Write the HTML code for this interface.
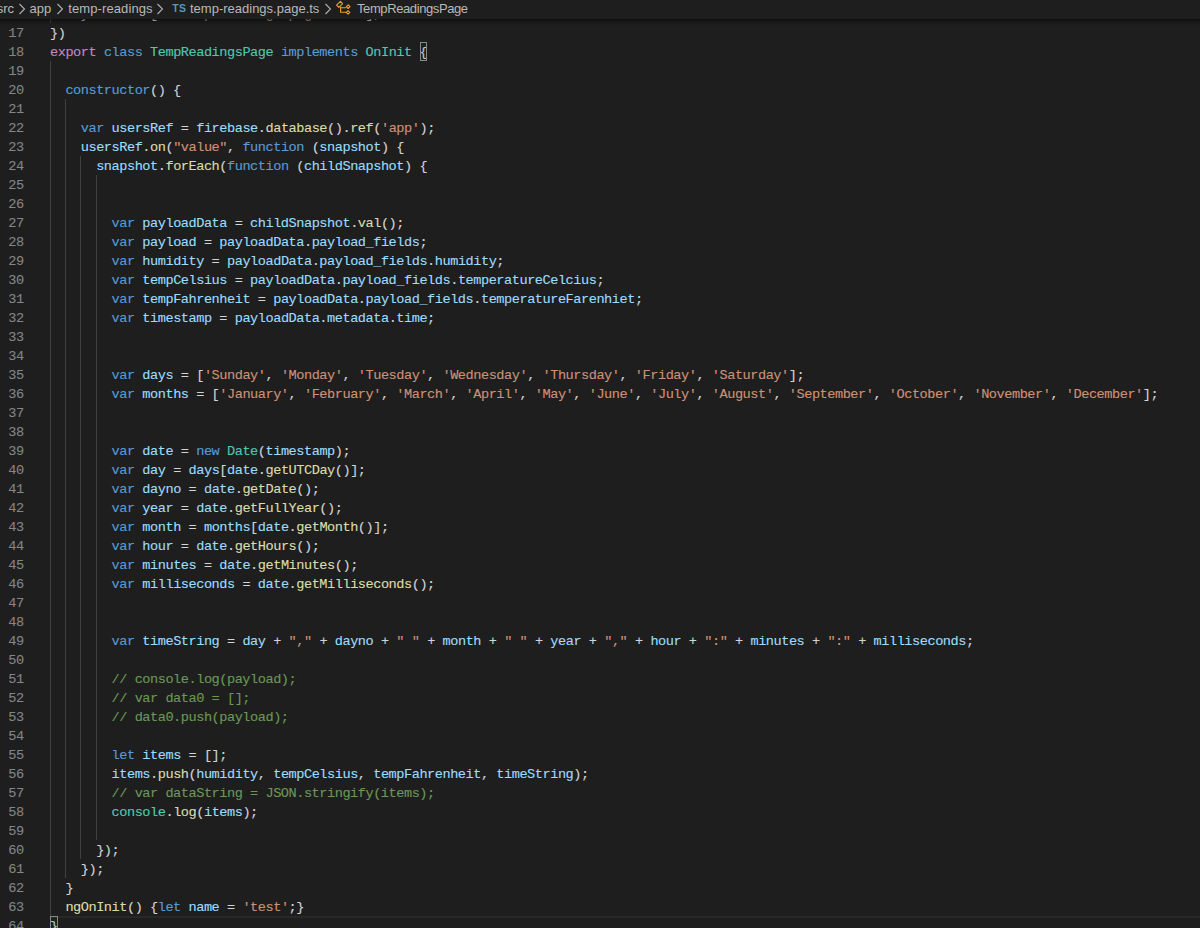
<!DOCTYPE html>
<html><head><meta charset="utf-8"><style>
html,body{margin:0;padding:0;}
body{width:1200px;height:928px;overflow:hidden;background:#1e1e1e;position:relative;}
.ed{position:absolute;left:0;top:0;width:1200px;height:928px;overflow:hidden;}
.ln{position:absolute;left:0;width:23.7px;margin-top:1px;letter-spacing:-0.4630px;-webkit-text-stroke:0.1px currentColor;height:19px;line-height:19px;text-align:right;color:#858585;font-family:"Liberation Mono",monospace;font-size:13.600px;white-space:pre;}
.cl{position:absolute;left:50px;margin-top:0.5px;height:19px;line-height:19px;color:#d4d4d4;font-family:"Liberation Mono",monospace;font-size:13.600px;letter-spacing:-0.4630px;white-space:pre;-webkit-text-stroke:0.12px currentColor;}
.ig{position:absolute;width:1px;height:19px;background:#404040;}
.kw{color:#569cd6}.ctl{color:#c586c0}.ty{color:#4ec9b0}.var{color:#9cdcfe}.fn{color:#dcdcaa}.str{color:#ce9178}.com{color:#6a9955}.pun{color:#d4d4d4}
.bc{position:absolute;left:0;top:0;width:1200px;height:19px;background:#1e1e1e;font-family:"Liberation Sans",sans-serif;font-size:13px;color:#b9b9b9;white-space:pre;}
.bc span{position:absolute;top:0;line-height:19px;}
.shadow{position:absolute;left:0;top:19px;width:1200px;height:6px;box-shadow:#000 0 6px 6px -6px inset;}
.curline{position:absolute;left:50px;top:916px;width:1150px;height:17px;border-top:2px solid #282828;}
.bm{position:absolute;box-sizing:border-box;border:1px solid #888;background:rgba(0,100,0,0.1);}
</style></head><body>
<div class="ed">
<div class="curline"></div>
<div class="ln" style="top:4px">16</div>
<div class="cl" style="top:4px">  <span class="var">styleUrls</span><span class="pun">: [</span><span class="str">'./temp-readings.page.scss'</span><span class="pun">],</span></div>
<div class="ig" style="top:4px;left:50px"></div>
<div class="ln" style="top:23px">17</div>
<div class="cl" style="top:23px"><span class="pun">})</span></div>
<div class="ln" style="top:42px">18</div>
<div class="cl" style="top:42px"><span class="ctl">export</span><span class="pun"> </span><span class="kw">class</span><span class="pun"> </span><span class="ty">TempReadingsPage</span><span class="pun"> </span><span class="kw">implements</span><span class="pun"> </span><span class="ty">OnInit</span><span class="pun"> {</span></div>
<div class="ln" style="top:61px">19</div>
<div class="cl" style="top:61px"></div>
<div class="ig" style="top:61px;left:50px"></div>
<div class="ln" style="top:80px">20</div>
<div class="cl" style="top:80px">  <span class="kw">constructor</span><span class="pun">() {</span></div>
<div class="ig" style="top:80px;left:50px"></div>
<div class="ln" style="top:99px">21</div>
<div class="cl" style="top:99px"></div>
<div class="ig" style="top:99px;left:50px"></div>
<div class="ig" style="top:99px;left:65px"></div>
<div class="ln" style="top:118px">22</div>
<div class="cl" style="top:118px">    <span class="kw">var</span><span class="pun"> </span><span class="var">usersRef</span><span class="pun"> = </span><span class="var">firebase</span><span class="pun">.</span><span class="fn">database</span><span class="pun">().</span><span class="fn">ref</span><span class="pun">(</span><span class="str">'app'</span><span class="pun">);</span></div>
<div class="ig" style="top:118px;left:50px"></div>
<div class="ig" style="top:118px;left:65px"></div>
<div class="ln" style="top:137px">23</div>
<div class="cl" style="top:137px">    <span class="var">usersRef</span><span class="pun">.</span><span class="fn">on</span><span class="pun">(</span><span class="str">"value"</span><span class="pun">, </span><span class="kw">function</span><span class="pun"> (</span><span class="var">snapshot</span><span class="pun">) {</span></div>
<div class="ig" style="top:137px;left:50px"></div>
<div class="ig" style="top:137px;left:65px"></div>
<div class="ln" style="top:156px">24</div>
<div class="cl" style="top:156px">      <span class="var">snapshot</span><span class="pun">.</span><span class="fn">forEach</span><span class="pun">(</span><span class="kw">function</span><span class="pun"> (</span><span class="var">childSnapshot</span><span class="pun">) {</span></div>
<div class="ig" style="top:156px;left:50px"></div>
<div class="ig" style="top:156px;left:65px"></div>
<div class="ig" style="top:156px;left:80px"></div>
<div class="ln" style="top:175px">25</div>
<div class="cl" style="top:175px"></div>
<div class="ig" style="top:175px;left:50px"></div>
<div class="ig" style="top:175px;left:65px"></div>
<div class="ig" style="top:175px;left:80px"></div>
<div class="ig" style="top:175px;left:96px"></div>
<div class="ln" style="top:194px">26</div>
<div class="cl" style="top:194px"></div>
<div class="ig" style="top:194px;left:50px"></div>
<div class="ig" style="top:194px;left:65px"></div>
<div class="ig" style="top:194px;left:80px"></div>
<div class="ig" style="top:194px;left:96px"></div>
<div class="ln" style="top:213px">27</div>
<div class="cl" style="top:213px">        <span class="kw">var</span><span class="pun"> </span><span class="var">payloadData</span><span class="pun"> = </span><span class="var">childSnapshot</span><span class="pun">.</span><span class="fn">val</span><span class="pun">();</span></div>
<div class="ig" style="top:213px;left:50px"></div>
<div class="ig" style="top:213px;left:65px"></div>
<div class="ig" style="top:213px;left:80px"></div>
<div class="ig" style="top:213px;left:96px"></div>
<div class="ln" style="top:232px">28</div>
<div class="cl" style="top:232px">        <span class="kw">var</span><span class="pun"> </span><span class="var">payload</span><span class="pun"> = </span><span class="var">payloadData</span><span class="pun">.</span><span class="var">payload_fields</span><span class="pun">;</span></div>
<div class="ig" style="top:232px;left:50px"></div>
<div class="ig" style="top:232px;left:65px"></div>
<div class="ig" style="top:232px;left:80px"></div>
<div class="ig" style="top:232px;left:96px"></div>
<div class="ln" style="top:251px">29</div>
<div class="cl" style="top:251px">        <span class="kw">var</span><span class="pun"> </span><span class="var">humidity</span><span class="pun"> = </span><span class="var">payloadData</span><span class="pun">.</span><span class="var">payload_fields</span><span class="pun">.</span><span class="var">humidity</span><span class="pun">;</span></div>
<div class="ig" style="top:251px;left:50px"></div>
<div class="ig" style="top:251px;left:65px"></div>
<div class="ig" style="top:251px;left:80px"></div>
<div class="ig" style="top:251px;left:96px"></div>
<div class="ln" style="top:270px">30</div>
<div class="cl" style="top:270px">        <span class="kw">var</span><span class="pun"> </span><span class="var">tempCelsius</span><span class="pun"> = </span><span class="var">payloadData</span><span class="pun">.</span><span class="var">payload_fields</span><span class="pun">.</span><span class="var">temperatureCelcius</span><span class="pun">;</span></div>
<div class="ig" style="top:270px;left:50px"></div>
<div class="ig" style="top:270px;left:65px"></div>
<div class="ig" style="top:270px;left:80px"></div>
<div class="ig" style="top:270px;left:96px"></div>
<div class="ln" style="top:289px">31</div>
<div class="cl" style="top:289px">        <span class="kw">var</span><span class="pun"> </span><span class="var">tempFahrenheit</span><span class="pun"> = </span><span class="var">payloadData</span><span class="pun">.</span><span class="var">payload_fields</span><span class="pun">.</span><span class="var">temperatureFarenhiet</span><span class="pun">;</span></div>
<div class="ig" style="top:289px;left:50px"></div>
<div class="ig" style="top:289px;left:65px"></div>
<div class="ig" style="top:289px;left:80px"></div>
<div class="ig" style="top:289px;left:96px"></div>
<div class="ln" style="top:308px">32</div>
<div class="cl" style="top:308px">        <span class="kw">var</span><span class="pun"> </span><span class="var">timestamp</span><span class="pun"> = </span><span class="var">payloadData</span><span class="pun">.</span><span class="var">metadata</span><span class="pun">.</span><span class="var">time</span><span class="pun">;</span></div>
<div class="ig" style="top:308px;left:50px"></div>
<div class="ig" style="top:308px;left:65px"></div>
<div class="ig" style="top:308px;left:80px"></div>
<div class="ig" style="top:308px;left:96px"></div>
<div class="ln" style="top:327px">33</div>
<div class="cl" style="top:327px"></div>
<div class="ig" style="top:327px;left:50px"></div>
<div class="ig" style="top:327px;left:65px"></div>
<div class="ig" style="top:327px;left:80px"></div>
<div class="ig" style="top:327px;left:96px"></div>
<div class="ln" style="top:346px">34</div>
<div class="cl" style="top:346px"></div>
<div class="ig" style="top:346px;left:50px"></div>
<div class="ig" style="top:346px;left:65px"></div>
<div class="ig" style="top:346px;left:80px"></div>
<div class="ig" style="top:346px;left:96px"></div>
<div class="ln" style="top:365px">35</div>
<div class="cl" style="top:365px">        <span class="kw">var</span><span class="pun"> </span><span class="var">days</span><span class="pun"> = [</span><span class="str">'Sunday'</span><span class="pun">, </span><span class="str">'Monday'</span><span class="pun">, </span><span class="str">'Tuesday'</span><span class="pun">, </span><span class="str">'Wednesday'</span><span class="pun">, </span><span class="str">'Thursday'</span><span class="pun">, </span><span class="str">'Friday'</span><span class="pun">, </span><span class="str">'Saturday'</span><span class="pun">];</span></div>
<div class="ig" style="top:365px;left:50px"></div>
<div class="ig" style="top:365px;left:65px"></div>
<div class="ig" style="top:365px;left:80px"></div>
<div class="ig" style="top:365px;left:96px"></div>
<div class="ln" style="top:384px">36</div>
<div class="cl" style="top:384px">        <span class="kw">var</span><span class="pun"> </span><span class="var">months</span><span class="pun"> = [</span><span class="str">'January'</span><span class="pun">, </span><span class="str">'February'</span><span class="pun">, </span><span class="str">'March'</span><span class="pun">, </span><span class="str">'April'</span><span class="pun">, </span><span class="str">'May'</span><span class="pun">, </span><span class="str">'June'</span><span class="pun">, </span><span class="str">'July'</span><span class="pun">, </span><span class="str">'August'</span><span class="pun">, </span><span class="str">'September'</span><span class="pun">, </span><span class="str">'October'</span><span class="pun">, </span><span class="str">'November'</span><span class="pun">, </span><span class="str">'December'</span><span class="pun">];</span></div>
<div class="ig" style="top:384px;left:50px"></div>
<div class="ig" style="top:384px;left:65px"></div>
<div class="ig" style="top:384px;left:80px"></div>
<div class="ig" style="top:384px;left:96px"></div>
<div class="ln" style="top:403px">37</div>
<div class="cl" style="top:403px"></div>
<div class="ig" style="top:403px;left:50px"></div>
<div class="ig" style="top:403px;left:65px"></div>
<div class="ig" style="top:403px;left:80px"></div>
<div class="ig" style="top:403px;left:96px"></div>
<div class="ln" style="top:422px">38</div>
<div class="cl" style="top:422px"></div>
<div class="ig" style="top:422px;left:50px"></div>
<div class="ig" style="top:422px;left:65px"></div>
<div class="ig" style="top:422px;left:80px"></div>
<div class="ig" style="top:422px;left:96px"></div>
<div class="ln" style="top:441px">39</div>
<div class="cl" style="top:441px">        <span class="kw">var</span><span class="pun"> </span><span class="var">date</span><span class="pun"> = </span><span class="kw">new</span><span class="pun"> </span><span class="ty">Date</span><span class="pun">(</span><span class="var">timestamp</span><span class="pun">);</span></div>
<div class="ig" style="top:441px;left:50px"></div>
<div class="ig" style="top:441px;left:65px"></div>
<div class="ig" style="top:441px;left:80px"></div>
<div class="ig" style="top:441px;left:96px"></div>
<div class="ln" style="top:460px">40</div>
<div class="cl" style="top:460px">        <span class="kw">var</span><span class="pun"> </span><span class="var">day</span><span class="pun"> = </span><span class="var">days</span><span class="pun">[</span><span class="var">date</span><span class="pun">.</span><span class="fn">getUTCDay</span><span class="pun">()];</span></div>
<div class="ig" style="top:460px;left:50px"></div>
<div class="ig" style="top:460px;left:65px"></div>
<div class="ig" style="top:460px;left:80px"></div>
<div class="ig" style="top:460px;left:96px"></div>
<div class="ln" style="top:479px">41</div>
<div class="cl" style="top:479px">        <span class="kw">var</span><span class="pun"> </span><span class="var">dayno</span><span class="pun"> = </span><span class="var">date</span><span class="pun">.</span><span class="fn">getDate</span><span class="pun">();</span></div>
<div class="ig" style="top:479px;left:50px"></div>
<div class="ig" style="top:479px;left:65px"></div>
<div class="ig" style="top:479px;left:80px"></div>
<div class="ig" style="top:479px;left:96px"></div>
<div class="ln" style="top:498px">42</div>
<div class="cl" style="top:498px">        <span class="kw">var</span><span class="pun"> </span><span class="var">year</span><span class="pun"> = </span><span class="var">date</span><span class="pun">.</span><span class="fn">getFullYear</span><span class="pun">();</span></div>
<div class="ig" style="top:498px;left:50px"></div>
<div class="ig" style="top:498px;left:65px"></div>
<div class="ig" style="top:498px;left:80px"></div>
<div class="ig" style="top:498px;left:96px"></div>
<div class="ln" style="top:517px">43</div>
<div class="cl" style="top:517px">        <span class="kw">var</span><span class="pun"> </span><span class="var">month</span><span class="pun"> = </span><span class="var">months</span><span class="pun">[</span><span class="var">date</span><span class="pun">.</span><span class="fn">getMonth</span><span class="pun">()];</span></div>
<div class="ig" style="top:517px;left:50px"></div>
<div class="ig" style="top:517px;left:65px"></div>
<div class="ig" style="top:517px;left:80px"></div>
<div class="ig" style="top:517px;left:96px"></div>
<div class="ln" style="top:536px">44</div>
<div class="cl" style="top:536px">        <span class="kw">var</span><span class="pun"> </span><span class="var">hour</span><span class="pun"> = </span><span class="var">date</span><span class="pun">.</span><span class="fn">getHours</span><span class="pun">();</span></div>
<div class="ig" style="top:536px;left:50px"></div>
<div class="ig" style="top:536px;left:65px"></div>
<div class="ig" style="top:536px;left:80px"></div>
<div class="ig" style="top:536px;left:96px"></div>
<div class="ln" style="top:555px">45</div>
<div class="cl" style="top:555px">        <span class="kw">var</span><span class="pun"> </span><span class="var">minutes</span><span class="pun"> = </span><span class="var">date</span><span class="pun">.</span><span class="fn">getMinutes</span><span class="pun">();</span></div>
<div class="ig" style="top:555px;left:50px"></div>
<div class="ig" style="top:555px;left:65px"></div>
<div class="ig" style="top:555px;left:80px"></div>
<div class="ig" style="top:555px;left:96px"></div>
<div class="ln" style="top:574px">46</div>
<div class="cl" style="top:574px">        <span class="kw">var</span><span class="pun"> </span><span class="var">milliseconds</span><span class="pun"> = </span><span class="var">date</span><span class="pun">.</span><span class="fn">getMilliseconds</span><span class="pun">();</span></div>
<div class="ig" style="top:574px;left:50px"></div>
<div class="ig" style="top:574px;left:65px"></div>
<div class="ig" style="top:574px;left:80px"></div>
<div class="ig" style="top:574px;left:96px"></div>
<div class="ln" style="top:593px">47</div>
<div class="cl" style="top:593px"></div>
<div class="ig" style="top:593px;left:50px"></div>
<div class="ig" style="top:593px;left:65px"></div>
<div class="ig" style="top:593px;left:80px"></div>
<div class="ig" style="top:593px;left:96px"></div>
<div class="ln" style="top:612px">48</div>
<div class="cl" style="top:612px"></div>
<div class="ig" style="top:612px;left:50px"></div>
<div class="ig" style="top:612px;left:65px"></div>
<div class="ig" style="top:612px;left:80px"></div>
<div class="ig" style="top:612px;left:96px"></div>
<div class="ln" style="top:631px">49</div>
<div class="cl" style="top:631px">        <span class="kw">var</span><span class="pun"> </span><span class="var">timeString</span><span class="pun"> = </span><span class="var">day</span><span class="pun"> + </span><span class="str">","</span><span class="pun"> + </span><span class="var">dayno</span><span class="pun"> + </span><span class="str">" "</span><span class="pun"> + </span><span class="var">month</span><span class="pun"> + </span><span class="str">" "</span><span class="pun"> + </span><span class="var">year</span><span class="pun"> + </span><span class="str">","</span><span class="pun"> + </span><span class="var">hour</span><span class="pun"> + </span><span class="str">":"</span><span class="pun"> + </span><span class="var">minutes</span><span class="pun"> + </span><span class="str">":"</span><span class="pun"> + </span><span class="var">milliseconds</span><span class="pun">;</span></div>
<div class="ig" style="top:631px;left:50px"></div>
<div class="ig" style="top:631px;left:65px"></div>
<div class="ig" style="top:631px;left:80px"></div>
<div class="ig" style="top:631px;left:96px"></div>
<div class="ln" style="top:650px">50</div>
<div class="cl" style="top:650px"></div>
<div class="ig" style="top:650px;left:50px"></div>
<div class="ig" style="top:650px;left:65px"></div>
<div class="ig" style="top:650px;left:80px"></div>
<div class="ig" style="top:650px;left:96px"></div>
<div class="ln" style="top:669px">51</div>
<div class="cl" style="top:669px">        <span class="com">// console.log(payload);</span></div>
<div class="ig" style="top:669px;left:50px"></div>
<div class="ig" style="top:669px;left:65px"></div>
<div class="ig" style="top:669px;left:80px"></div>
<div class="ig" style="top:669px;left:96px"></div>
<div class="ln" style="top:688px">52</div>
<div class="cl" style="top:688px">        <span class="com">// var data0 = [];</span></div>
<div class="ig" style="top:688px;left:50px"></div>
<div class="ig" style="top:688px;left:65px"></div>
<div class="ig" style="top:688px;left:80px"></div>
<div class="ig" style="top:688px;left:96px"></div>
<div class="ln" style="top:707px">53</div>
<div class="cl" style="top:707px">        <span class="com">// data0.push(payload);</span></div>
<div class="ig" style="top:707px;left:50px"></div>
<div class="ig" style="top:707px;left:65px"></div>
<div class="ig" style="top:707px;left:80px"></div>
<div class="ig" style="top:707px;left:96px"></div>
<div class="ln" style="top:726px">54</div>
<div class="cl" style="top:726px"></div>
<div class="ig" style="top:726px;left:50px"></div>
<div class="ig" style="top:726px;left:65px"></div>
<div class="ig" style="top:726px;left:80px"></div>
<div class="ig" style="top:726px;left:96px"></div>
<div class="ln" style="top:745px">55</div>
<div class="cl" style="top:745px">        <span class="kw">let</span><span class="pun"> </span><span class="var">items</span><span class="pun"> = [];</span></div>
<div class="ig" style="top:745px;left:50px"></div>
<div class="ig" style="top:745px;left:65px"></div>
<div class="ig" style="top:745px;left:80px"></div>
<div class="ig" style="top:745px;left:96px"></div>
<div class="ln" style="top:764px">56</div>
<div class="cl" style="top:764px">        <span class="var">items</span><span class="pun">.</span><span class="fn">push</span><span class="pun">(</span><span class="var">humidity</span><span class="pun">, </span><span class="var">tempCelsius</span><span class="pun">, </span><span class="var">tempFahrenheit</span><span class="pun">, </span><span class="var">timeString</span><span class="pun">);</span></div>
<div class="ig" style="top:764px;left:50px"></div>
<div class="ig" style="top:764px;left:65px"></div>
<div class="ig" style="top:764px;left:80px"></div>
<div class="ig" style="top:764px;left:96px"></div>
<div class="ln" style="top:783px">57</div>
<div class="cl" style="top:783px">        <span class="com">// var dataString = JSON.stringify(items);</span></div>
<div class="ig" style="top:783px;left:50px"></div>
<div class="ig" style="top:783px;left:65px"></div>
<div class="ig" style="top:783px;left:80px"></div>
<div class="ig" style="top:783px;left:96px"></div>
<div class="ln" style="top:802px">58</div>
<div class="cl" style="top:802px">        <span class="ty">console</span><span class="pun">.</span><span class="fn">log</span><span class="pun">(</span><span class="var">items</span><span class="pun">);</span></div>
<div class="ig" style="top:802px;left:50px"></div>
<div class="ig" style="top:802px;left:65px"></div>
<div class="ig" style="top:802px;left:80px"></div>
<div class="ig" style="top:802px;left:96px"></div>
<div class="ln" style="top:821px">59</div>
<div class="cl" style="top:821px"></div>
<div class="ig" style="top:821px;left:50px"></div>
<div class="ig" style="top:821px;left:65px"></div>
<div class="ig" style="top:821px;left:80px"></div>
<div class="ig" style="top:821px;left:96px"></div>
<div class="ln" style="top:840px">60</div>
<div class="cl" style="top:840px">      <span class="pun">});</span></div>
<div class="ig" style="top:840px;left:50px"></div>
<div class="ig" style="top:840px;left:65px"></div>
<div class="ig" style="top:840px;left:80px"></div>
<div class="ln" style="top:859px">61</div>
<div class="cl" style="top:859px">    <span class="pun">});</span></div>
<div class="ig" style="top:859px;left:50px"></div>
<div class="ig" style="top:859px;left:65px"></div>
<div class="ln" style="top:878px">62</div>
<div class="cl" style="top:878px">  <span class="pun">}</span></div>
<div class="ig" style="top:878px;left:50px"></div>
<div class="ln" style="top:897px">63</div>
<div class="cl" style="top:897px">  <span class="fn">ngOnInit</span><span class="pun">() {</span><span class="kw">let</span><span class="pun"> </span><span class="var">name</span><span class="pun"> = </span><span class="str">'test'</span><span class="pun">;}</span></div>
<div class="ig" style="top:897px;left:50px"></div>
<div class="ln" style="top:916px">64</div>
<div class="cl" style="top:916px"><span class="pun">}</span></div>
<div class="bm" style="left:420px;top:42px;width:7px;height:19px"></div>
<div class="bm" style="left:50px;top:916px;width:8px;height:19px"></div>
</div>
<div class="bc"><span style="right:1186px;top:-1px">src</span><svg style="position:absolute;left:18px;top:2.5px" width="8" height="12" viewBox="0 0 8 12"><path d="M1.5 1 L6.5 6 L1.5 11" fill="none" stroke="#b0b0b0" stroke-width="1.1"/></svg><span style="left:29.5px;top:-1px">app</span><svg style="position:absolute;left:55.5px;top:2.5px" width="8" height="12" viewBox="0 0 8 12"><path d="M1.5 1 L6.5 6 L1.5 11" fill="none" stroke="#b0b0b0" stroke-width="1.1"/></svg><span style="left:68.3px;top:-1px;letter-spacing:0.1px">temp-readings</span><svg style="position:absolute;left:156px;top:2.5px" width="8" height="12" viewBox="0 0 8 12"><path d="M1.5 1 L6.5 6 L1.5 11" fill="none" stroke="#b0b0b0" stroke-width="1.1"/></svg><span style="left:172.3px;top:-0.8px;color:#519aba;font-weight:bold;font-size:10.5px;letter-spacing:0.4px">TS</span><span style="left:190px;top:-1px">temp-readings.page.ts</span><svg style="position:absolute;left:323.5px;top:2.5px" width="8" height="12" viewBox="0 0 8 12"><path d="M1.5 1 L6.5 6 L1.5 11" fill="none" stroke="#b0b0b0" stroke-width="1.1"/></svg><svg style="position:absolute;left:335px;top:0px" width="16" height="16" viewBox="0 0 16 16"><g fill="none" stroke="#ee9d28" stroke-width="1.15" stroke-linejoin="round"><path d="M1.6 5.2 L5.4 1.4 L7.6 3.6 L3.8 7.4 Z"/><path d="M5.6 6.6 V12.2 H11.2 M5.6 7.7 H11.4"/><path d="M11.4 6.7 L13.2 4.9 L15 6.7 L13.2 8.5 Z"/><path d="M11.2 12.4 L13 10.6 L14.8 12.4 L13 14.2 Z"/></g></svg><span style="left:357px;top:-1px;letter-spacing:-0.4px">TempReadingsPage</span></div>
<div class="shadow"></div>
</body></html>
